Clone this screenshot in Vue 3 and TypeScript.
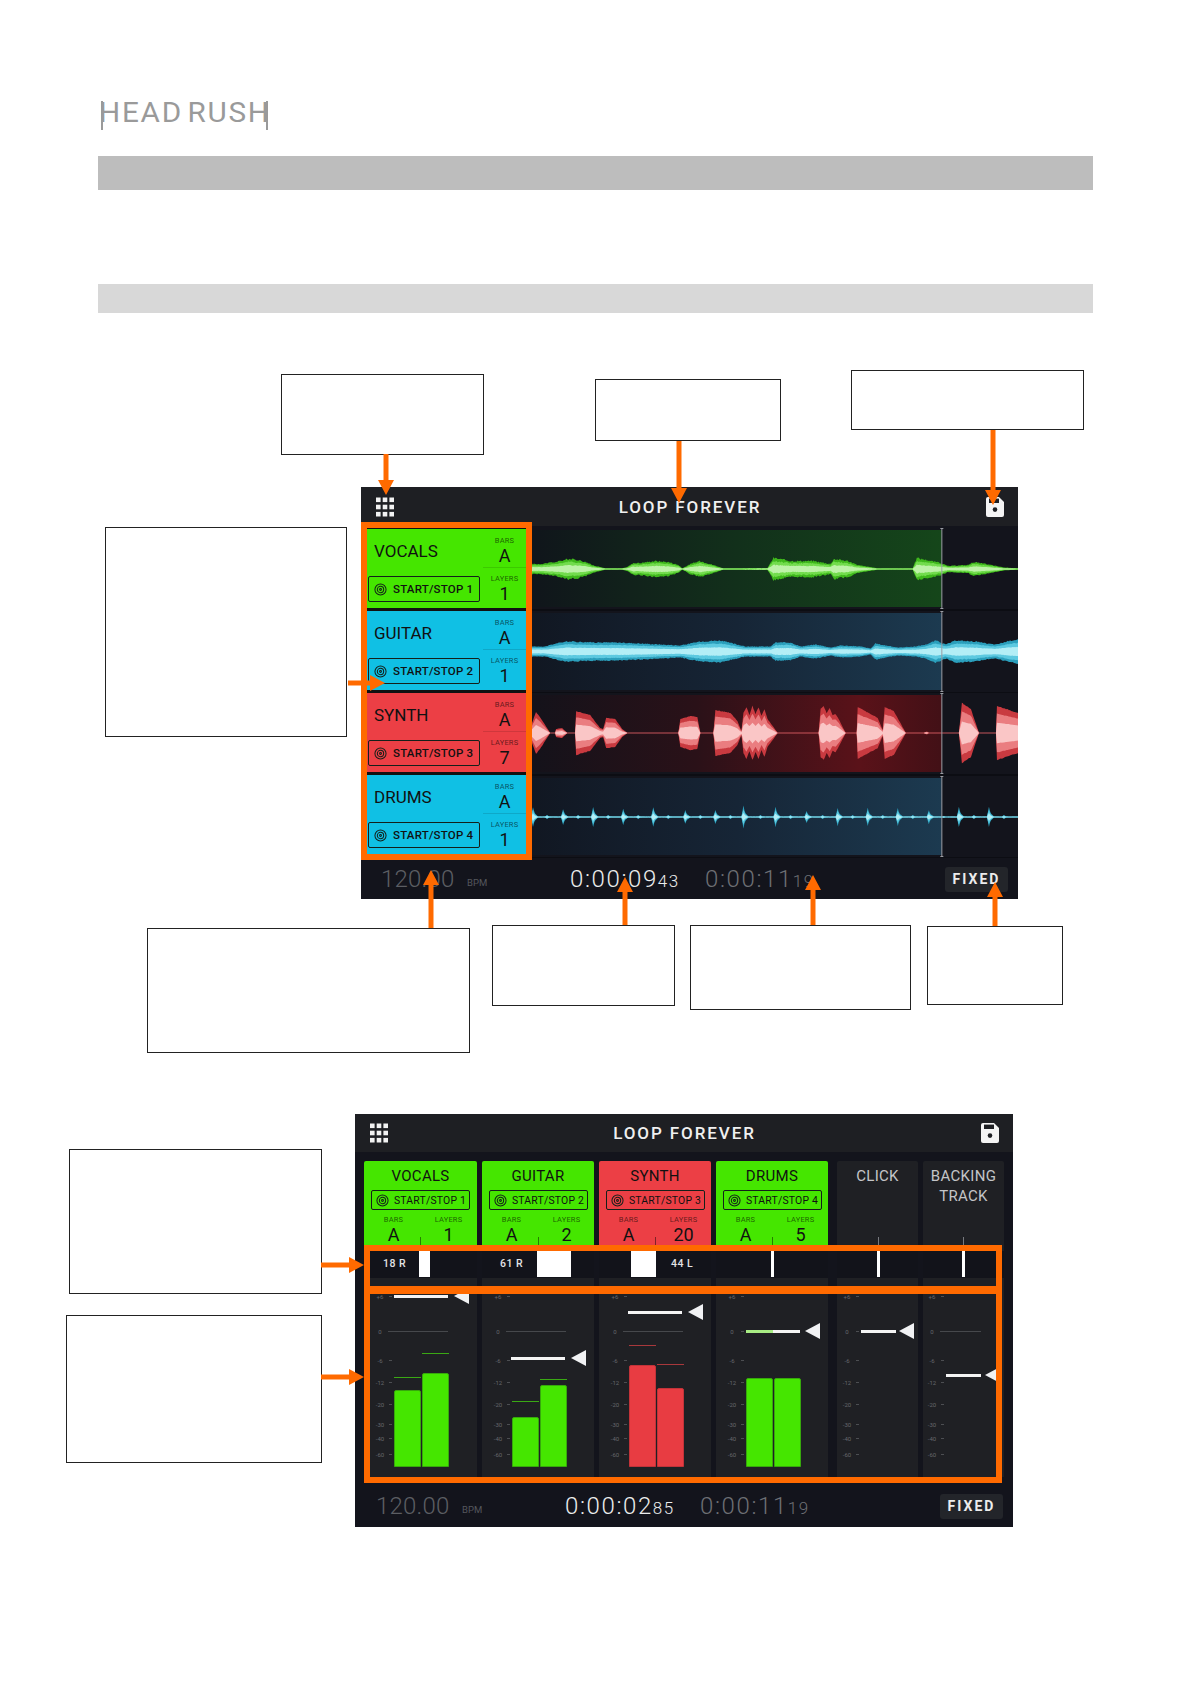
<template>
  <div class="page">
    <header class="logo">
      <span class="logo__text">HEAD<span class="logo__gap">RUSH</span></span>
      <i class="logo__stem logo__stem--left"></i>
      <i class="logo__stem logo__stem--right"></i>
    </header>
    <div class="band band--dark"></div>
    <div class="band band--light"></div>

    <!-- track view -->
    <section class="screen screen--tracks">
      <div class="topbar">
        <svg class="menu-icon" viewBox="0 0 18 20"><rect v-for="d in menuDots" :key="d.k" :x="d.x" :y="d.y" width="4.6" height="4.6" fill="#f2f2f2" /></svg>
        <span class="topbar__title">LOOP FOREVER</span>
        <svg class="save-icon" viewBox="0 0 18 20"><path d="M2 0h11l5 5v13a2 2 0 0 1-2 2H2a2 2 0 0 1-2-2V2a2 2 0 0 1 2-2z" fill="#f4f4f4" /><rect x="3" y="1.6" width="10" height="4.4" fill="#1e1f23" /><circle cx="9" cy="12.6" r="2.3" fill="#1e1f23" /></svg>
      </div>
      <div class="tracks-body">
        <div class="tracks">
          <div v-for="t in tracks" :key="t.name" class="cell" :class="`cell--${t.color}`">
            <div class="cell__main">
              <div class="cell__name">{{ t.name }}</div>
              <div class="stop-btn">
                <svg class="target" viewBox="0 0 14 14"><circle cx="7" cy="7" r="6" /><circle cx="7" cy="7" r="3.4" /><circle cx="7" cy="7" r="1" /></svg>
                <span>START/STOP {{ t.index }}</span>
              </div>
            </div>
            <div class="cell__side">
              <div class="stat stat--first"><div class="stat__label">BARS</div><div class="stat__value">A</div></div>
              <div class="stat"><div class="stat__label">LAYERS</div><div class="stat__value">{{ t.layers }}</div></div>
            </div>
          </div>
        </div>
        <div class="waves">
          <svg v-for="w in waves" :key="w.id" class="wave" viewBox="0 0 485 82.5" preserveAspectRatio="none">
            <defs>
              <linearGradient :id="w.id" x1="0" x2="1" y1="0" y2="0">
                <stop v-for="s in w.stops" :key="s.at" :offset="s.at" :stop-color="s.color" />
              </linearGradient>
            </defs>
            <rect x="0" y="81.5" width="485" height="1" fill="#07070b" />
            <rect x="0" y="2" width="409" height="77" :fill="`url(#${w.id})`" />
            <path v-for="l in w.layers" :key="l.fill" :d="l.d" :fill="l.fill" />
            <path d="M409 0v81M407.5 0.5h3M407.5 80.5h3" stroke="#9a9ca3" stroke-width="1" fill="none" />
          </svg>
        </div>
      </div>
      <div class="transport">
        <span class="t-bpm">120.00</span>
        <span class="t-bpm-label">BPM</span>
        <span class="t-now">0:00:09<small>43</small></span>
        <span class="t-total">0:00:11<small>19</small></span>
        <span class="t-fixed">FIXED</span>
      </div>
    </section>

    <!-- mixer view -->
    <section class="screen screen--mixer">
      <div class="topbar topbar--mixer">
        <svg class="menu-icon" viewBox="0 0 18 20"><rect v-for="d in menuDots" :key="d.k" :x="d.x" :y="d.y" width="4.6" height="4.6" fill="#f2f2f2" /></svg>
        <span class="topbar__title">LOOP FOREVER</span>
        <svg class="save-icon" viewBox="0 0 18 20"><path d="M2 0h11l5 5v13a2 2 0 0 1-2 2H2a2 2 0 0 1-2-2V2a2 2 0 0 1 2-2z" fill="#f4f4f4" /><rect x="3" y="1.6" width="10" height="4.4" fill="#1e1f23" /><circle cx="9" cy="12.6" r="2.3" fill="#1e1f23" /></svg>
      </div>
      <div class="mixer">
        <div v-for="s in strips" :key="s.name" class="strip" :class="[`strip--${s.color}`, { 'strip--narrow': !s.index }]">
          <div class="strip__top">
            <div class="strip__name">{{ s.name }}</div>
            <template v-if="s.index">
              <div class="stop-btn stop-btn--small">
                <svg class="target" viewBox="0 0 14 14"><circle cx="7" cy="7" r="6" /><circle cx="7" cy="7" r="3.4" /><circle cx="7" cy="7" r="1" /></svg>
                <span>START/STOP {{ s.index }}</span>
              </div>
              <div class="strip__stats">
                <div class="strip__stat"><div class="stat__label">BARS</div><div class="stat__value">A</div></div>
                <div class="strip__stat"><div class="stat__label">LAYERS</div><div class="stat__value">{{ s.layers }}</div></div>
              </div>
            </template>
            <i class="strip__tick" :style="{ left: s.panCenter + 'px' }"></i>
          </div>
          <div class="pan">
            <span v-if="s.panText" class="pan__text" :style="{ left: s.panTextX + 'px' }">{{ s.panText }}</span>
            <i class="pan__fill" :style="{ left: s.panX + 'px', width: s.panW + 'px' }"></i>
          </div>
          <div class="faders">
            <div v-for="m in scale" :key="m.label" class="mark" :style="{ top: m.top + 'px', left: s.scaleX - 7 + 'px' }">
              <span class="mark__label">{{ m.label }}</span><i class="mark__tick"></i>
            </div>
            <i v-if="s.zeroW" class="zero-line" :style="{ left: s.zeroX + 'px', width: s.zeroW + 'px' }"></i>
            <div v-if="s.meters.length" class="meters" :class="{ 'meters--red': s.color === 'red' }">
              <div v-for="(b, i) in s.meters" :key="i" class="meter" :style="{ height: b.h + 'px' }">
                <i v-if="b.peak" class="meter__peak" :style="{ bottom: b.peak + 'px' }"></i>
              </div>
            </div>
            <div class="fader" :class="{ 'fader--signal': s.signal }" :style="{ top: s.faderY + 'px', left: s.faderX + 'px', width: s.faderW + 'px' }"></div>
            <svg class="handle" viewBox="0 0 15 16" :style="{ top: s.faderY - 8 + 'px', left: s.handleX + 'px' }"><polygon points="15,0 15,16 0,8" fill="#f1f2f4" /></svg>
          </div>
        </div>
        <div class="focus focus--pan"></div>
        <div class="focus focus--levels"></div>
      </div>
      <div class="transport transport--mixer">
        <span class="t-bpm">120.00</span>
        <span class="t-bpm-label">BPM</span>
        <span class="t-now">0:00:02<small>85</small></span>
        <span class="t-total">0:00:11<small>19</small></span>
        <span class="t-fixed">FIXED</span>
      </div>
    </section>

    <!-- annotation layer -->
    <div v-for="(c, i) in callouts" :key="i" class="callout" :style="{ left: c[0] + 'px', top: c[1] + 'px', width: c[2] + 'px', height: c[3] + 'px' }"></div>
    <svg class="arrows" viewBox="0 0 1190 1684">
      <g v-for="(a, i) in arrows" :key="i">
        <line :x1="a.x1" :y1="a.y1" :x2="a.sx" :y2="a.sy" />
        <polygon :points="a.head" />
      </g>
    </svg>
  </div>
</template>

<script setup lang="ts">
type Key = [number, number]

// grid icon in the top bar
const menuDots = [0, 7.2, 14.4].flatMap((y) =>
  [0, 6.7, 13.4].map((x) => ({ k: `${x}-${y}`, x, y: y + 0.5 }))
)

const tracks = [
  { name: 'VOCALS', index: 1, layers: 1, color: 'green' },
  { name: 'GUITAR', index: 2, layers: 1, color: 'blue' },
  { name: 'SYNTH', index: 3, layers: 7, color: 'red' },
  { name: 'DRUMS', index: 4, layers: 1, color: 'blue' }
]

// envelope points are [page x, half height]
const vocalKeys: Key[] = [
  [532, 5], [540, 5], [556, 7], [560, 8], [568, 10], [578, 9], [586, 7], [592, 4], [600, 2], [605, 0.7], [622, 0.7], [627, 2],
  [633, 6], [640, 6], [655, 8], [668, 7], [678, 4], [682, 0.7], [690, 5], [700, 8], [713, 4], [723, 0.7], [767, 1], [773, 11],
  [790, 8], [813, 8], [830, 5], [833, 10], [847, 8], [857, 4], [877, 0.7], [912, 0.7], [916, 11], [940, 6], [947, 3], [967, 4],
  [973, 7], [990, 4], [1003, 1.5], [1017, 0.7]
]
const guitarKeys: Key[] = [
  [532, 5], [545, 5], [556, 8], [566, 10], [600, 9], [615, 9], [640, 8], [680, 6], [685, 7], [700, 10], [720, 11], [745, 5],
  [770, 5], [775, 9], [790, 9], [800, 5], [815, 7], [830, 4], [840, 6], [860, 5], [870, 3], [875, 8], [885, 6], [897, 4],
  [915, 5], [925, 7], [935, 11], [945, 7], [955, 11], [975, 10], [985, 8], [995, 7], [1010, 11], [1017, 12]
]
const synthKeys: Key[] = [
  [532, 10], [536, 21], [540, 16], [550, 0.3], [555, 0.3], [556, 4], [562, 5], [567, 0.3], [575, 0.3], [576, 22], [590, 18], [600, 5],
  [603, 4], [606, 15], [615, 14], [622, 4], [627, 0.3], [678, 0.3], [680, 14], [690, 17], [697, 16], [700, 0.3], [713, 0.3], [715, 23],
  [730, 20], [737, 12], [741, 2], [743, 20], [746, 26], [749, 18], [752, 27], [755, 19], [758, 26], [761, 17], [764, 24], [767, 14],
  [770, 10], [777, 0.3], [818, 0.3], [820, 24], [823, 27], [826, 20], [829, 25], [832, 18], [835, 19], [838, 14], [841, 8], [845, 0.3],
  [856, 0.3], [857, 26], [877, 15], [882, 3], [884, 26], [893, 22], [905, 0.3], [923, 0.3], [926, 1.5], [928, 0.3], [958, 0.3], [961, 30],
  [970, 24], [978, 0.3], [995, 0.3], [996, 27], [1017, 20]
]
const drumHits: Key[] = [
  [533, 10], [547, 2], [563, 8], [578, 2], [593, 10], [608, 2], [623, 8], [638, 2], [653, 10], [668, 2], [685, 7], [700, 2],
  [715, 7], [730, 2], [743, 11], [760, 2], [775, 10], [790, 2], [806, 6], [822, 2], [837, 9], [852, 2], [867, 9], [882, 2],
  [897, 9], [912, 2], [928, 7], [943, 1], [958, 10], [973, 2], [988, 10], [1003, 2]
]
const drumKeys: Key[] = drumHits.flatMap(([x, h]): Key[] => [[x - 2, 0.5], [x, h], [x + 1.5, h * 0.4], [x + 5, 0.5]])

function envelope(keys: Key[], x: number): number {
  if (x <= keys[0][0]) return keys[0][1]
  for (let i = 1; i < keys.length; i++) {
    if (x <= keys[i][0]) {
      const [x0, h0] = keys[i - 1]
      const [x1, h1] = keys[i]
      return h0 + ((h1 - h0) * (x - x0)) / (x1 - x0)
    }
  }
  return keys[keys.length - 1][1]
}

function wavePath(keys: Key[], factor: number, center: number, jitter: number, seed: number): string {
  let n = seed
  const rnd = () => {
    n = (n * 9301 + 49297) % 233280
    return n / 233280 - 0.5
  }
  const top: string[] = []
  const bottom: string[] = []
  for (let x = 532; x <= 1017; x++) {
    const h = envelope(keys, x) * factor
    top.push(`${x - 532} ${(center - h * (1 + jitter * rnd())).toFixed(1)}`)
    bottom.unshift(`${x - 532} ${(center + h * (1 + jitter * rnd())).toFixed(1)}`)
  }
  return `M${top.join('L')}L${bottom.join('L')}Z`
}

function makeWave(id: string, keys: Key[], center: number, jitter: number, colors: string[], stops: { at: string; color: string }[]) {
  const factors = [1, 0.72, 0.38]
  return {
    id,
    stops,
    layers: colors.map((fill, i) => ({ fill, d: wavePath(keys, factors[i], center, jitter, 17 + i * 31) }))
  }
}

const blueFill = ['#2b9fbc', '#5cc9e0', '#b3eef6']
const blueBg = [
  { at: '0', color: '#111722' },
  { at: '0.5', color: '#162536' },
  { at: '1', color: '#1c3a50' }
]

const waves = [
  makeWave('wave-vocals', vocalKeys, 41, 0.2, ['#3fb81c', '#72dc4d', '#bdf2a8'], [
    { at: '0', color: '#10151b' },
    { at: '0.5', color: '#12301b' },
    { at: '1', color: '#15461a' }
  ]),
  makeWave('wave-guitar', guitarKeys, 40.5, 0.12, blueFill, blueBg),
  makeWave('wave-synth', synthKeys, 40, 0.03, ['#c93a40', '#ea7d80', '#fac6c6'], [
    { at: '0', color: '#14121a' },
    { at: '0.4', color: '#2a1118' },
    { at: '0.8', color: '#5a1219' },
    { at: '1', color: '#421016' }
  ]),
  makeWave('wave-drums', drumKeys, 41, 0.08, blueFill, blueBg)
]

type Meter = { h: number; peak?: number }
type Strip = {
  name: string
  index?: number
  layers?: number
  color: string
  panCenter: number
  panText?: string
  panTextX?: number
  panX: number
  panW: number
  scaleX: number
  zeroX?: number
  zeroW?: number
  meters: Meter[]
  faderY: number
  faderX: number
  faderW: number
  handleX: number
  signal?: boolean
}

const strips: Strip[] = [
  {
    name: 'VOCALS', index: 1, layers: 1, color: 'green', panCenter: 56, panText: '18 R', panTextX: 19, panX: 55, panW: 11,
    scaleX: 16, zeroX: 24, zeroW: 60, meters: [{ h: 77, peak: 88 }, { h: 94, peak: 112 }], faderY: 18, faderX: 30, faderW: 54, handleX: 90
  },
  {
    name: 'GUITAR', index: 2, layers: 2, color: 'green', panCenter: 56, panText: '61 R', panTextX: 18, panX: 55, panW: 34,
    scaleX: 16, zeroX: 24, zeroW: 60, meters: [{ h: 50, peak: 64 }, { h: 82, peak: 86 }], faderY: 80, faderX: 29, faderW: 54, handleX: 89
  },
  {
    name: 'SYNTH', index: 3, layers: 20, color: 'red', panCenter: 56, panText: '44 L', panTextX: 72, panX: 32, panW: 25,
    scaleX: 16, zeroX: 24, zeroW: 60, meters: [{ h: 102, peak: 120 }, { h: 79, peak: 101 }], faderY: 34, faderX: 29, faderW: 54, handleX: 89
  },
  {
    name: 'DRUMS', index: 4, layers: 5, color: 'green', panCenter: 56, panX: 55, panW: 2.5,
    scaleX: 16, meters: [{ h: 89 }, { h: 89 }], faderY: 53, faderX: 30, faderW: 54, handleX: 89, signal: true
  },
  {
    name: 'CLICK', color: 'dark', panCenter: 41, panX: 40, panW: 2.5,
    scaleX: 10, meters: [], faderY: 53, faderX: 24, faderW: 35, handleX: 62
  },
  {
    name: 'BACKING TRACK', color: 'dark', panCenter: 40, panX: 39, panW: 2.5,
    scaleX: 9, zeroX: 17, zeroW: 41, meters: [], faderY: 97, faderX: 23, faderW: 35, handleX: 62
  }
]

// tops in px inside the fader panel
const scale = [
  { label: '+6', top: 18 },
  { label: '0', top: 53 },
  { label: '-6', top: 82 },
  { label: '-12', top: 104 },
  { label: '-20', top: 126 },
  { label: '-30', top: 146 },
  { label: '-40', top: 160 },
  { label: '-60', top: 176 }
]

const callouts = [
  [281, 374, 203, 81],
  [595, 379, 186, 62],
  [851, 370, 233, 60],
  [105, 527, 242, 210],
  [147, 928, 323, 125],
  [492, 925, 183, 81],
  [690, 925, 221, 85],
  [927, 926, 136, 79],
  [69, 1149, 253, 145],
  [66, 1315, 256, 148]
]

function makeArrow(x1: number, y1: number, x2: number, y2: number) {
  const dx = Math.sign(x2 - x1)
  const dy = Math.sign(y2 - y1)
  const len = 15
  const half = 8
  const bx = x2 - dx * len
  const by = y2 - dy * len
  const head = `${x2},${y2} ${bx + dy * half},${by + dx * half} ${bx - dy * half},${by - dx * half}`
  return { x1, y1, sx: bx, sy: by, head }
}

const arrows = [
  makeArrow(386, 454, 386, 495),
  makeArrow(679, 441, 679, 503),
  makeArrow(993, 430, 993, 505),
  makeArrow(348, 683, 385, 683),
  makeArrow(431, 928, 431, 870),
  makeArrow(625, 925, 625, 877),
  makeArrow(813, 925, 813, 875),
  makeArrow(995, 926, 995, 882),
  makeArrow(321, 1265, 364, 1265),
  makeArrow(321, 1377, 364, 1377)
]
</script>

<style scoped>
.page {
  position: relative;
  box-sizing: border-box;
  width: 1190px;
  height: 1684px;
  padding: 100px 97px 0 98px;
  overflow: hidden;
  background: #fff;
  font-family: Roboto, "Liberation Sans", sans-serif;
}

/* logo */
.logo {
  position: relative;
  height: 30px;
}
.logo__text {
  position: absolute;
  top: -2px;
  left: 1px;
  font-size: 27px;
  font-weight: 400;
  line-height: 30px;
  letter-spacing: 1.6px;
  color: #9a9a9a;
  transform: scaleX(1.1);
  transform-origin: left center;
}
.logo__gap {
  margin-left: 4px;
}
.logo__stem {
  position: absolute;
  top: 1px;
  width: 2px;
  height: 29px;
  background: #9a9a9a;
}
.logo__stem--left {
  left: 3px;
}
.logo__stem--right {
  left: 168px;
}

/* grey section bars */
.band--dark {
  height: 34px;
  margin-top: 26px;
  background: #bdbdbd;
}
.band--light {
  height: 29px;
  margin-top: 94px;
  background: #d8d8d8;
}

/* device screens */
.screen {
  display: flex;
  flex-direction: column;
  background: #13141c;
}
.screen--tracks {
  width: 657px;
  height: 412px;
  margin: 174px 0 0 263px;
}
.screen--mixer {
  width: 658px;
  height: 413px;
  margin: 215px 0 0 257px;
}
.topbar {
  display: flex;
  flex: none;
  align-items: center;
  justify-content: space-between;
  height: 39px;
  padding: 0 14px 0 15px;
  background: #1e1f23;
}
.topbar--mixer {
  height: 38px;
}
.topbar__title {
  font-size: 17px;
  font-weight: 500;
  letter-spacing: 1.9px;
  color: #f0f0f0;
}
.menu-icon,
.save-icon {
  width: 18px;
  height: 20px;
}

/* track view */
.tracks-body {
  display: flex;
  flex: none;
  height: 333px;
}
.tracks {
  display: grid;
  flex: none;
  box-sizing: border-box;
  grid-template-rows: repeat(4, 79px);
  row-gap: 3px;
  width: 171px;
  height: 338px;
  margin-top: -4px;
  padding-top: 1px;
  border: 6px solid #ff6a00;
  background: #111;
}
.cell {
  display: grid;
  grid-template-columns: 116px 1fr;
  color: #111;
}
.cell--green {
  background: #45e600;
}
.cell--blue {
  background: #10c0e4;
}
.cell--red {
  background: #ec3f45;
}
.cell__name {
  height: 22px;
  margin: 11px 0 14px 7px;
  font-size: 17px;
  line-height: 22px;
}
.stop-btn {
  display: flex;
  align-items: center;
  gap: 6px;
  box-sizing: border-box;
  width: 112px;
  height: 26px;
  margin-left: 1px;
  padding-left: 5px;
  border: 1.5px solid #14201a;
  border-radius: 2px;
  font-size: 11.5px;
  font-weight: 500;
  letter-spacing: 0.2px;
  white-space: nowrap;
}
.target {
  flex: none;
  width: 13px;
  height: 13px;
  fill: none;
  stroke: #14201a;
  stroke-width: 1.1;
}
.stat {
  height: 39px;
  padding-top: 6px;
  box-sizing: border-box;
  text-align: center;
}
.stat--first {
  padding-top: 7px;
  border-bottom: 1px solid rgba(0, 0, 0, 0.12);
}
.stat__label {
  font-size: 7.5px;
  line-height: 10px;
  letter-spacing: 0.2px;
  color: rgba(0, 0, 0, 0.6);
}
.stat__value {
  margin-top: 1px;
  font-size: 18px;
  line-height: 18px;
}
.waves {
  flex: 1;
  padding-top: 2px;
}
.wave {
  display: block;
  width: 100%;
  height: 82.5px;
}

/* transport bar */
.transport {
  display: flex;
  flex: 1;
  align-items: center;
  padding-left: 20px;
  color: #fff;
}
.transport--mixer {
  padding: 2px 0 0 21px;
}
.t-bpm {
  width: 86px;
  font-size: 24px;
  font-weight: 300;
  letter-spacing: 0.2px;
  color: #5c5e63;
}
.t-bpm-label {
  width: 103px;
  margin-top: 6px;
  font-size: 9.5px;
  color: #55575c;
}
.t-now,
.t-total {
  font-size: 24px;
  font-weight: 300;
  letter-spacing: 1.6px;
  color: #eceded;
}
.t-now {
  width: 135px;
}
.t-total {
  width: 240px;
  color: #6d6f74;
}
.t-now small,
.t-total small {
  font-size: 17px;
  letter-spacing: 1.6px;
}
.t-fixed {
  width: 63px;
  height: 25px;
  border-radius: 3px;
  background: #23252a;
  font-size: 14px;
  font-weight: 700;
  line-height: 25px;
  letter-spacing: 2px;
  text-align: center;
  color: #ececec;
}

/* mixer view */
.mixer {
  position: relative;
  display: grid;
  flex: none;
  grid-template-columns: 113px 112px 112px 112px 81px 81px;
  column-gap: 5px;
  height: 316px;
  padding: 9px 0 6px 9px;
}
.strip {
  display: flex;
  flex-direction: column;
  width: 100%;
}
.strip--narrow {
  margin-left: 4px;
}
.strip--narrow:last-of-type {
  margin-left: 5px;
}
.strip__top {
  position: relative;
  flex: none;
  box-sizing: border-box;
  height: 90px;
  padding-top: 5px;
  border-radius: 2px 2px 0 0;
  color: #111;
}
.strip--green .strip__top {
  background: #45e600;
}
.strip--red .strip__top {
  background: #ec3f45;
}
.strip--dark .strip__top {
  background: #1f2024;
  color: #c4c5c8;
}
.strip__name {
  padding: 0 6px;
  font-size: 15px;
  line-height: 20px;
  letter-spacing: 0.3px;
  text-align: center;
}
.stop-btn--small {
  gap: 5px;
  width: 99px;
  height: 20px;
  margin: 4px 0 0 7px;
  padding-left: 4px;
  font-size: 10.4px;
  font-weight: 400;
}
.strip__stats {
  display: flex;
  margin: 5px 0 0 2px;
}
.strip__stat {
  width: 55px;
  text-align: center;
}
.strip__stat .stat__value {
  margin-top: 1px;
}
.strip__tick {
  position: absolute;
  top: 76px;
  width: 1px;
  height: 14px;
  background: rgba(0, 0, 0, 0.45);
}
.strip--dark .strip__tick {
  background: #77797e;
}
.pan {
  position: relative;
  flex: none;
  height: 27px;
  background: #12131a;
}
.pan__text {
  position: absolute;
  top: 0;
  font-size: 10.5px;
  font-weight: 500;
  line-height: 26px;
  letter-spacing: 0.5px;
  color: #e4e4e6;
}
.pan__fill {
  position: absolute;
  top: 0;
  bottom: 1px;
  background: #fff;
}
.faders {
  position: relative;
  flex: 1;
  background: #1f2024;
}
.mark {
  position: absolute;
  display: flex;
  align-items: center;
  gap: 2px;
  height: 8px;
  margin-top: -4px;
}
.mark__label {
  width: 14px;
  font-size: 6px;
  text-align: center;
  color: #66686c;
}
.mark__tick {
  width: 3px;
  height: 1px;
  background: #4c4e52;
}
.zero-line {
  position: absolute;
  top: 53px;
  height: 1px;
  background: #46484c;
}
.meters {
  position: absolute;
  bottom: 10px;
  left: 30px;
  display: flex;
  align-items: flex-end;
  gap: 1px;
}
.meter {
  position: relative;
  width: 27px;
  box-sizing: border-box;
  border: 1px solid #37a80c;
  border-radius: 2px 2px 0 0;
  background: #45e600;
}
.meter__peak {
  position: absolute;
  left: -1px;
  right: -1px;
  height: 1.5px;
  background: #3aa814;
}
.meters--red .meter {
  border-color: #c23339;
  background: #e83c42;
}
.meters--red .meter__peak {
  background: #a8383c;
}
.fader {
  position: absolute;
  height: 2.5px;
  margin-top: -1px;
  background: #f4f4f4;
}
.fader--signal {
  background: linear-gradient(90deg, #a8ec84 50%, #f4f4f4 50%);
}
.handle {
  position: absolute;
  width: 15px;
  height: 16px;
}
.focus {
  position: absolute;
  left: 9px;
  box-sizing: border-box;
  width: 638px;
  border: 6px solid #ff6a00;
}
.focus--pan {
  top: 93px;
  height: 47px;
}
.focus--levels {
  top: 136px;
  height: 195px;
}

/* annotations */
.callout {
  position: absolute;
  box-sizing: border-box;
  border: 1px solid #222;
  background: #fff;
}
.arrows {
  position: absolute;
  inset: 0;
  width: 1190px;
  height: 1684px;
  pointer-events: none;
}
.arrows line {
  stroke: #ff6a00;
  stroke-width: 5;
}
.arrows polygon {
  fill: #ff6a00;
}
</style>

<style>
body {
  margin: 0;
  background: #fff;
}
</style>
